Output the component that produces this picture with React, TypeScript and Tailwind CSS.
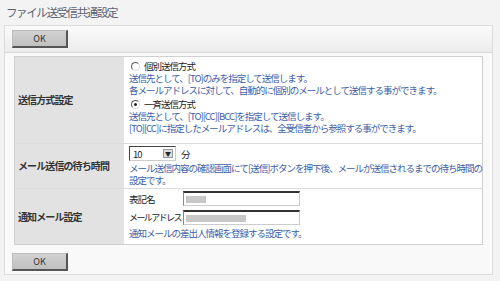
import React from "react";

const font = { fontFamily: '"Noto Sans CJK JP", "Liberation Sans", sans-serif' };

function OkButton() {
  return (
    <div className="flex h-[18px] w-[56px] items-center justify-center border border-[#bbb] border-b-[#555] border-r-[#555] border-b-2 border-r-2 bg-gradient-to-b from-[#d2d2d2] to-[#c0c0c0] text-[9px] leading-none text-[#333]">
      OK
    </div>
  );
}

function Radio({ checked }: { checked?: boolean }) {
  return (
    <span className="relative mr-[4px] inline-block h-[9px] w-[9px] shrink-0 rounded-full border border-[#555] border-r-[#ddd] border-b-[#ddd] bg-white">
      {checked && <span className="absolute left-[2px] top-[2px] h-[3px] w-[3px] rounded-full bg-[#222]" />}
    </span>
  );
}

export default function App() {
  return (
    <div className="h-[281px] w-[500px] overflow-hidden bg-[#f3f3f3]" style={font}>
      <div className="px-[6px] pt-[4px] text-[11.5px] leading-[16px] tracking-[-1.4px] text-[#5a6272]">ファイル送受信共通設定</div>
      <div className="mx-[4px] mt-[5px] h-[250px] w-[489px] border border-[#dcdcdc] bg-[#f9f9f9]">
        <div className="flex h-[27px] items-center border-b border-[#d8d8d8] bg-gradient-to-b from-[#fbfbfb] to-[#ececec] pl-[7px]">
          <OkButton />
        </div>
        <div className="mx-[9px] mt-[3px] border border-[#d0d0d0] bg-white text-[9.5px] leading-[12px] tracking-[-1px]">
          <div className="flex h-[87px] border-b border-[#dcdcdc]">
            <div className="flex w-[109px] shrink-0 items-center bg-[#e2e2e2] pl-[3px] text-[10px] font-bold tracking-[-0.9px] text-[#333]">送信方式設定</div>
            <div className="flex flex-col whitespace-nowrap pl-[5px] pt-[3px] text-[#3b5ea8]">
              <div className="flex items-center pl-[2px] text-[#222]"><Radio />個別送信方式</div>
              <div>送信先として、[TO]のみを指定して送信します。</div>
              <div>各メールアドレスに対して、自動的に個別のメールとして送信する事ができます。</div>
              <div className="mt-[2px] flex items-center pl-[2px] text-[#222]"><Radio checked />一斉送信方式</div>
              <div>送信先として、[TO][CC][BCC]を指定して送信します。</div>
              <div>[TO][CC]に指定したメールアドレスは、全受信者から参照する事ができます。</div>
            </div>
          </div>
          <div className="flex h-[45px] border-b border-[#dcdcdc]">
            <div className="flex w-[109px] shrink-0 items-center bg-[#e2e2e2] pl-[3px] text-[10px] font-bold tracking-[-0.9px] text-[#333]">メール送信の待ち時間</div>
            <div className="flex flex-col whitespace-nowrap pl-[5px] pt-[2px] text-[#3b5ea8]">
              <div className="flex items-center text-[#222]">
                <div className="flex h-[15px] w-[47px] items-center justify-between border border-[#444] border-b-[#ccc] border-r-[#ccc] bg-white pl-[3px] pr-[2px]">
                  <span>10</span>
                  <span className="flex h-[9px] w-[10px] items-center justify-center border border-[#999] bg-[#ddd] text-[6px] leading-none tracking-normal">▼</span>
                </div>
                <span className="ml-[5px]">分</span>
              </div>
              <div className="mt-[1px]">メール送信内容の確認画面にて[送信]ボタンを押下後、メールが送信されるまでの待ち時間の</div>
              <div>設定です。</div>
            </div>
          </div>
          <div className="flex h-[55px]">
            <div className="flex w-[109px] shrink-0 items-center bg-[#e2e2e2] pl-[3px] text-[10px] font-bold tracking-[-0.9px] text-[#333]">通知メール設定</div>
            <div className="flex flex-col pl-[5px] pt-[2px] text-[#3b5ea8]">
              <div className="flex items-center text-[#222]">
                <span className="w-[54px] whitespace-nowrap">表記名</span>
                <div className="flex h-[15px] w-[117px] items-center border border-[#888] border-t-2 border-t-[#333] border-b-[#ccc] border-r-[#ccc] bg-white pl-[2px]">
                  <span className="h-[7px] w-[20px] bg-[#c8c8c8]" />
                </div>
              </div>
              <div className="mt-[4px] flex items-center text-[#222]">
                <span className="w-[54px] whitespace-nowrap text-[9px] tracking-[-1.6px]">メールアドレス</span>
                <div className="flex h-[15px] w-[117px] items-center border border-[#888] border-t-2 border-t-[#333] border-b-[#ccc] border-r-[#ccc] bg-white pl-[2px]">
                  <span className="h-[7px] w-[60px] bg-[#c8c8c8]" />
                </div>
              </div>
              <div className="mt-[2px] whitespace-nowrap">通知メールの差出人情報を登録する設定です。</div>
            </div>
          </div>
        </div>
        <div className="mt-[6px] flex h-[22px] items-center pl-[7px]">
          <OkButton />
        </div>
      </div>
    </div>
  );
}
